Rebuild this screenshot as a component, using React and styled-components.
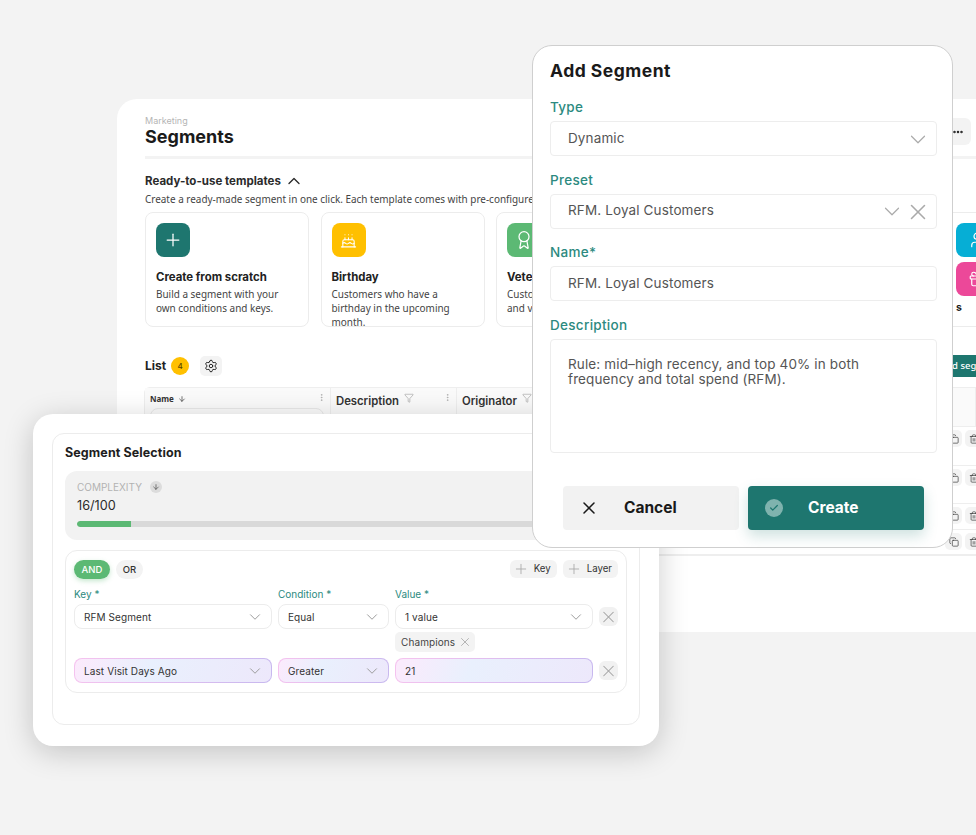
import React from "react";
import styled, { createGlobalStyle } from "styled-components";
import {
  Plus, Cake, Award, User, Gift, Settings, ChevronUp, ChevronDown, X, ArrowDown,
  Funnel, EllipsisVertical, Ellipsis, Copy, Trash2, Check,
} from "lucide-react";

const Global = createGlobalStyle`
  html, body { margin: 0; padding: 0; background: #f3f3f3; }
  * { box-sizing: border-box; }
`;

const HEAD = `"Inter", "Liberation Sans", sans-serif`;
const BODY = `"Noto Sans", "Open Sans", sans-serif`;
const TEAL = "#1e766f";
const LABEL = "#2c8a80";

const Canvas = styled.div`
  position: relative;
  width: 976px;
  height: 835px;
  overflow: hidden;
  background: #f3f3f3;
  font-family: ${BODY};
  color: #222;
`;

/* ---------- back window ---------- */
const PageWindow = styled.section`
  position: absolute;
  left: 117px;
  top: 99px;
  width: 859px;
  height: 533px;
  background: #fff;
  border-radius: 20px 0 0 0;
  overflow: hidden;
  padding: 16px 0 0 28px;
`;
const HeaderRow = styled.header`
  display: flex;
  justify-content: space-between;
  align-items: flex-start;
  height: 40px;
`;
const Crumb = styled.div`
  font: 400 9px/12px ${HEAD};
  color: #b5b5b5;
`;
const PageTitle = styled.h1`
  margin: 0;
  font: 700 18px/20px ${HEAD};
  color: #1a1a1a;
`;
const MoreButton = styled.button`
  width: 60px;
  height: 27px;
  margin: 3px 5px 0 0;
  border: 0;
  border-radius: 6px;
  background: #f3f3f3;
  display: flex;
  align-items: center;
  justify-content: flex-end;
  padding: 0 7px;
  color: #222;
`;
const Divider = styled.div`
  height: 3px;
  background: #f3f3f3;
  margin-top: 1px;
`;
const SectionHead = styled.div`
  display: flex;
  align-items: center;
  gap: 3px;
  height: 16px;
  margin-top: 14px;
  font: 700 11.5px/16px ${HEAD};
  color: #2b2b2b;
`;
const SectionNote = styled.p`
  margin: 3px 0 0;
  font: 400 9.95px/14px ${BODY};
  color: #444;
  white-space: nowrap;
`;
const TemplatesRow = styled.div`
  display: flex;
  justify-content: space-between;
  margin-top: 6px;
  height: 115px;
`;
const Cards = styled.div`
  display: flex;
  gap: 11.5px;
`;
const Card = styled.article`
  width: 164px;
  height: 115px;
  border: 1px solid #ececec;
  border-radius: 8px;
  padding: 10px 24px 0 10px;
  overflow: hidden;
`;
const IconTile = styled.div`
  width: 34px;
  height: 34px;
  border-radius: 8px;
  background: ${(p) => p.$color};
  color: #fff;
  display: flex;
  align-items: center;
  justify-content: center;
  flex: none;
`;
const CardTitle = styled.h3`
  margin: 13px 0 0;
  font: 700 11.4px/14px ${HEAD};
  color: #222;
  white-space: nowrap;
`;
const CardText = styled.p`
  margin: 3px 0 0;
  font: 400 9.95px/14px ${BODY};
  color: #444;
`;
const SideTemplates = styled.div`
  width: 24px;
  border-top: 1px solid #ececec;
  border-bottom: 1px solid #ececec;
  padding: 10px 0 0 4px;
  display: flex;
  flex-direction: column;
  gap: 5px;
`;
const SideTile = styled(IconTile)`
  justify-content: flex-start;
  padding-left: 12px;
`;
const SideCaption = styled.div`
  font: 700 10.5px/14px ${HEAD};
  color: #222;
`;
const ListRow = styled.div`
  display: flex;
  align-items: center;
  justify-content: space-between;
  margin-top: 27px;
  height: 23px;
`;
const ListLeft = styled.div`
  display: flex;
  align-items: center;
`;
const ListTitle = styled.h2`
  margin: 0;
  font: 700 12px/16px ${HEAD};
  color: #222;
`;
const CountBadge = styled.span`
  width: 18px;
  height: 18px;
  margin-left: 5px;
  border-radius: 50%;
  background: #ffc000;
  font: 500 8px/18px ${HEAD};
  text-align: center;
  color: #5b4500;
`;
const GearButton = styled.button`
  width: 22px;
  height: 20px;
  margin-left: 11px;
  border: 0;
  border-radius: 5px;
  background: #f3f3f3;
  display: flex;
  align-items: center;
  justify-content: center;
  padding: 0;
  color: #222;
`;
const AddButton = styled.button`
  width: 110px;
  height: 22px;
  margin-right: -50px;
  border: 0;
  border-radius: 4px;
  background: ${TEAL};
  color: #fff;
  font: 500 9.5px/22px ${BODY};
  padding: 0 0 0 24px;
  text-align: left;
  white-space: nowrap;
`;
const Table = styled.div`
  margin: 10px 0 0 -1px;
  border: 1px solid #eeeeee;
  border-right: 0;
  border-radius: 6px 0 0 0;
`;
const TableHead = styled.div`
  display: grid;
  grid-template-columns: 186px 126px 1fr;
  height: 39px;
  background: #fafafa;
  border-bottom: 1px solid #eeeeee;
`;
const HeadCell = styled.div`
  position: relative;
  padding: 5px 0 0 5px;
  border-right: 1px solid #eeeeee;
  display: flex;
  align-items: flex-start;
  gap: 5px;
  font: 600 11.3px/16px ${HEAD};
  color: #333;
`;
const NameCell = styled(HeadCell)`
  flex-direction: column;
  gap: 3px;
  padding: 5px 6px 0 5px;
  font: 700 8px/12px ${BODY};
`;
const NameLine = styled.div`
  display: flex;
  align-items: center;
  gap: 4px;
`;
const NameFilter = styled.div`
  width: 100%;
  height: 16px;
  border: 1px solid #e8e8e8;
  border-radius: 8px;
`;
const Kebab = styled.span`
  position: absolute;
  right: 4px;
  top: 5px;
  color: #aaa;
  display: flex;
`;
const TableRow = styled.div`
  display: flex;
  justify-content: flex-end;
  gap: 3px;
  height: ${(p) => p.$h}px;
  border-bottom: 1px solid #eeeeee;
  padding: 3px 0 0;
  margin-right: -6px;
`;
const ActionButton = styled.button`
  width: 17px;
  height: 17px;
  border: 0;
  border-radius: 5px;
  background: #f3f3f3;
  padding: 0;
  display: flex;
  align-items: center;
  justify-content: center;
  color: #333;
`;

/* ---------- modal ---------- */
const Modal = styled.section`
  position: absolute;
  left: 532px;
  top: 45px;
  width: 421px;
  height: 503px;
  background: #fff;
  border: 1px solid #cfcfcf;
  border-radius: 20px;
  padding: 15px 15px 0 17px;
  z-index: 3;
`;
const ModalTitle = styled.h2`
  margin: 0 0 16px;
  font: 700 17.5px/20px ${HEAD};
  letter-spacing: 0.5px;
  color: #1a1a1a;
`;
const Field = styled.div`
  margin-bottom: 13.5px;
`;
const FieldLabel = styled.label`
  display: block;
  font: 500 13.5px/20px ${HEAD};
  letter-spacing: 0.3px;
  color: ${LABEL};
  margin-bottom: 4px;
`;
const Input = styled.div`
  height: 35px;
  border: 1px solid #ededed;
  border-radius: 4px;
  padding: 0 5px 0 17px;
  display: flex;
  align-items: center;
  font: 400 13.5px/18px ${HEAD};
  letter-spacing: 0.13px;
  color: #555;
`;
const InputText = styled.span`
  flex: 1;
  padding-bottom: 2px;
`;
const IconSlot = styled.span`
  width: 26px;
  height: 26px;
  margin-top: 1px;
  display: flex;
  align-items: center;
  justify-content: center;
  flex: none;
  color: #aaa;
`;
const TextArea = styled.div`
  height: 114px;
  border: 1px solid #ededed;
  border-radius: 4px;
  padding: 17px 60px 0 17px;
  font: 400 13.5px/15px ${HEAD};
  letter-spacing: 0.13px;
  color: #555;
`;
const ModalActions = styled.div`
  display: flex;
  justify-content: center;
  gap: 9px;
  margin-top: 33px;
`;
const ModalButton = styled.button`
  width: 176px;
  height: 44px;
  border: 0;
  border-radius: 4px;
  display: flex;
  align-items: center;
  gap: 25px;
  padding: 0 0 0 16px;
  font: 700 15.5px/18px ${HEAD};
  background: ${(p) => (p.$primary ? TEAL : "#f2f2f2")};
  color: ${(p) => (p.$primary ? "#fff" : "#1a1a1a")};
  box-shadow: ${(p) => (p.$primary ? "0 6px 14px rgba(30,118,111,.22)" : "none")};
`;
const CancelGlyph = styled.span`
  width: 20px;
  height: 20px;
  display: flex;
  align-items: center;
  justify-content: center;
`;
const CheckDisc = styled.span`
  width: 18px;
  height: 18px;
  margin-left: 1px;
  border-radius: 50%;
  background: #7fb3ae;
  color: ${TEAL};
  display: flex;
  align-items: center;
  justify-content: center;
  flex: none;
`;

/* ---------- front window ---------- */
const SelectionWindow = styled.section`
  position: absolute;
  left: 33px;
  top: 414px;
  width: 626px;
  height: 332px;
  background: #fff;
  border-radius: 20px;
  padding: 19px;
  box-shadow: 0 6px 30px rgba(0, 0, 0, 0.2);
  z-index: 2;
`;
const SelectionPanel = styled.div`
  height: 292px;
  border: 1px solid #ececec;
  border-radius: 12px;
  padding: 10px 12px 0;
`;
const SelectionTitle = styled.h2`
  margin: 0 0 10px;
  font: 700 12.5px/17px ${HEAD};
  letter-spacing: 0.1px;
  color: #1e1e1e;
`;
const Complexity = styled.div`
  height: 69px;
  border-radius: 12px;
  background: #f2f2f2;
  padding: 9px 13px 0 12px;
`;
const ComplexityHead = styled.div`
  display: flex;
  align-items: center;
  gap: 8px;
  font: 400 10px/14px ${HEAD};
  color: #b2b2b2;
`;
const ArrowDisc = styled.span`
  width: 12px;
  height: 12px;
  border-radius: 50%;
  background: #dcdcdc;
  color: #444;
  display: flex;
  align-items: center;
  justify-content: center;
`;
const ComplexityValue = styled.div`
  font: 400 12.7px/18px ${HEAD};
  color: #2a2a2a;
  margin-top: 3px;
`;
const Bar = styled.div`
  height: 6px;
  margin-top: 6px;
  border-radius: 3px;
  background: #d9d9d9;
  overflow: hidden;
`;
const BarFill = styled.div`
  height: 100%;
  background: #5cb974;
  border-radius: 3px 0 0 3px;
  width: ${(p) => p.$value}%;
`;
const Conditions = styled.div`
  margin-top: 10px;
  height: 143px;
  border: 1px solid #ececec;
  border-radius: 12px;
  padding: 8px 8px 0;
`;
const ConditionTop = styled.div`
  display: flex;
  align-items: center;
  justify-content: space-between;
  height: 20px;
`;
const Group = styled.div`
  display: flex;
  gap: 6px;
`;
const LogicButton = styled.button`
  height: 19px;
  width: ${(p) => p.$w}px;
  border: 0;
  border-radius: 10px;
  padding: 0;
  font: 500 9.5px/19px ${HEAD};
  background: ${(p) => (p.$active ? "#5cb974" : "#f3f3f3")};
  color: ${(p) => (p.$active ? "#fff" : "#333")};
  box-shadow: ${(p) => (p.$active ? "0 2px 5px rgba(92,185,116,.35)" : "none")};
`;
const AddChip = styled.button`
  height: 18px;
  border: 0;
  border-radius: 6px;
  background: #f3f3f3;
  padding: 0 6px 0 3px;
  display: flex;
  align-items: center;
  gap: 5px;
  font: 400 9.7px/18px ${HEAD};
  color: #333;
`;
const Plusish = styled.span`
  display: flex;
  color: #a8a8a8;
`;
const ConditionGrid = styled.div`
  display: grid;
  grid-template-columns: 198px 111px 198px 19px;
  column-gap: 6px;
  margin-top: 9px;
`;
const MiniLabel = styled.div`
  font: 400 10px/13px ${HEAD};
  color: ${LABEL};
  height: 16px;
`;
const Select = styled.div`
  height: 25px;
  border-radius: 8px;
  border: 1px solid ${(p) => (p.$glow ? "transparent" : "#ececec")};
  background: ${(p) =>
    p.$glow
      ? "linear-gradient(110deg,#fceafc,#e9f0fd 38%,#ede8fb) padding-box, linear-gradient(110deg,#f6c3ef,#c7b8ef) border-box"
      : "#fff"};
  padding: 0 7px 0 9px;
  display: flex;
  align-items: center;
  justify-content: space-between;
  font: 400 10px/14px ${HEAD};
  letter-spacing: 0.1px;
  color: #333;
`;
const Muted = styled.span`
  display: flex;
  color: #9a9a9a;
`;
const RemoveButton = styled.button`
  width: 19px;
  height: 19px;
  align-self: center;
  border: 0;
  border-radius: 6px;
  background: #f1f1f1;
  padding: 0;
  display: flex;
  align-items: center;
  justify-content: center;
  color: #a3a3a3;
`;
const ChipSlot = styled.div`
  grid-column: 3;
  height: 29px;
  padding-top: 3px;
  display: flex;
  align-items: flex-start;
`;
const Chip = styled.span`
  display: flex;
  align-items: center;
  gap: 3px;
  height: 20px;
  padding: 0 3px 0 6px;
  border-radius: 5px;
  background: #f3f3f3;
  font: 400 10px/14px ${HEAD};
  letter-spacing: 0.1px;
  color: #444;
`;
const Full = styled.div`
  grid-column: 1 / -1;
  display: grid;
  grid-template-columns: subgrid;
`;

const Chev = () => (
  <Muted><ChevronDown size={18} strokeWidth={1.3} /></Muted>
);

export default function App() {
  return (
    <Canvas>
      <Global />
      <PageWindow>
        <HeaderRow>
          <div>
            <Crumb>Marketing</Crumb>
            <PageTitle>Segments</PageTitle>
          </div>
          <MoreButton aria-label="More"><Ellipsis size={12} strokeWidth={3} /></MoreButton>
        </HeaderRow>
        <Divider />
        <SectionHead>
          Ready-to-use templates <ChevronUp size={20} strokeWidth={1.6} />
        </SectionHead>
        <SectionNote>Create a ready-made segment in one click. Each template comes with pre-configured conditions and keys.</SectionNote>
        <TemplatesRow>
          <Cards>
            <Card>
              <IconTile $color={TEAL}><Plus size={20} strokeWidth={1.5} /></IconTile>
              <CardTitle>Create from scratch</CardTitle>
              <CardText>Build a segment with your own conditions and keys.</CardText>
            </Card>
            <Card>
              <IconTile $color="#ffc000"><Cake size={17} strokeWidth={1.5} /></IconTile>
              <CardTitle>Birthday</CardTitle>
              <CardText>Customers who have a birthday in the upcoming month.</CardText>
            </Card>
            <Card>
              <IconTile $color="#5cb974"><Award size={20} strokeWidth={1.5} /></IconTile>
              <CardTitle>Veterans</CardTitle>
              <CardText>Customers who stay long and visit frequently.</CardText>
            </Card>
          </Cards>
          <SideTemplates>
            <SideTile $color="#06aed5"><User size={18} strokeWidth={1.6} /></SideTile>
            <SideTile $color="#ec4899"><Gift size={18} strokeWidth={1.6} /></SideTile>
            <SideCaption>s</SideCaption>
          </SideTemplates>
        </TemplatesRow>
        <ListRow>
          <ListLeft>
            <ListTitle>List</ListTitle>
            <CountBadge>4</CountBadge>
            <GearButton aria-label="Settings"><Settings size={14} strokeWidth={1.7} /></GearButton>
          </ListLeft>
          <AddButton>Add segment</AddButton>
        </ListRow>
        <Table>
          <TableHead>
            <NameCell>
              <NameLine>Name <ArrowDown size={8} strokeWidth={2} /></NameLine>
              <NameFilter />
              <Kebab><EllipsisVertical size={9} /></Kebab>
            </NameCell>
            <HeadCell>
              Description <Funnel size={10} strokeWidth={1.2} color="#888" />
              <Kebab><EllipsisVertical size={9} /></Kebab>
            </HeadCell>
            <HeadCell>
              Originator <Funnel size={10} strokeWidth={1.2} color="#888" />
            </HeadCell>
          </TableHead>
          {[39, 38, 26, 25].map((h) => (
            <TableRow key={h} $h={h}>
              <ActionButton aria-label="Copy"><Copy size={10} strokeWidth={1.6} /></ActionButton>
              <ActionButton aria-label="Delete"><Trash2 size={10} strokeWidth={1.6} /></ActionButton>
            </TableRow>
          ))}
        </Table>
      </PageWindow>

      <Modal>
        <ModalTitle>Add Segment</ModalTitle>
        <Field>
          <FieldLabel>Type</FieldLabel>
          <Input>
            <InputText>Dynamic</InputText>
            <IconSlot><ChevronDown size={33} strokeWidth={1.1} /></IconSlot>
          </Input>
        </Field>
        <Field>
          <FieldLabel>Preset</FieldLabel>
          <Input>
            <InputText>RFM. Loyal Customers</InputText>
            <IconSlot><ChevronDown size={33} strokeWidth={1.1} /></IconSlot>
            <IconSlot><X size={26} strokeWidth={1.4} /></IconSlot>
          </Input>
        </Field>
        <Field>
          <FieldLabel>Name*</FieldLabel>
          <Input><InputText>RFM. Loyal Customers</InputText></Input>
        </Field>
        <Field>
          <FieldLabel>Description</FieldLabel>
          <TextArea>Rule: mid–high recency, and top 40% in both frequency and total spend (RFM).</TextArea>
        </Field>
        <ModalActions>
          <ModalButton>
            <CancelGlyph><X size={28} strokeWidth={1.8} /></CancelGlyph>
            <span>Cancel</span>
          </ModalButton>
          <ModalButton $primary>
            <CheckDisc><Check size={10} strokeWidth={3} /></CheckDisc>
            <span>Create</span>
          </ModalButton>
        </ModalActions>
      </Modal>

      <SelectionWindow>
        <SelectionPanel>
          <SelectionTitle>Segment Selection</SelectionTitle>
          <Complexity>
            <ComplexityHead>
              COMPLEXITY
              <ArrowDisc><ArrowDown size={8} strokeWidth={2} /></ArrowDisc>
            </ComplexityHead>
            <ComplexityValue>16/100</ComplexityValue>
            <Bar><BarFill $value={10} /></Bar>
          </Complexity>
          <Conditions>
            <ConditionTop>
              <Group>
                <LogicButton $active $w={36}>AND</LogicButton>
                <LogicButton $w={27}>OR</LogicButton>
              </Group>
              <Group>
                <AddChip><Plusish><Plus size={16} strokeWidth={1.3} /></Plusish>Key</AddChip>
                <AddChip><Plusish><Plus size={16} strokeWidth={1.3} /></Plusish>Layer</AddChip>
              </Group>
            </ConditionTop>
            <ConditionGrid>
              <MiniLabel>Key *</MiniLabel>
              <MiniLabel>Condition *</MiniLabel>
              <MiniLabel>Value *</MiniLabel>
              <span />
              <Select>RFM Segment<Chev /></Select>
              <Select>Equal<Chev /></Select>
              <Select>1 value<Chev /></Select>
              <RemoveButton aria-label="Remove"><X size={20} strokeWidth={1.3} /></RemoveButton>
              <ChipSlot>
                <Chip>Champions <X size={14} strokeWidth={1.2} color="#999" /></Chip>
              </ChipSlot>
              <Full>
                <Select $glow>Last Visit Days Ago<Chev /></Select>
                <Select $glow>Greater<Chev /></Select>
                <Select $glow>21</Select>
                <RemoveButton aria-label="Remove"><X size={20} strokeWidth={1.3} /></RemoveButton>
              </Full>
            </ConditionGrid>
          </Conditions>
        </SelectionPanel>
      </SelectionWindow>
    </Canvas>
  );
}
